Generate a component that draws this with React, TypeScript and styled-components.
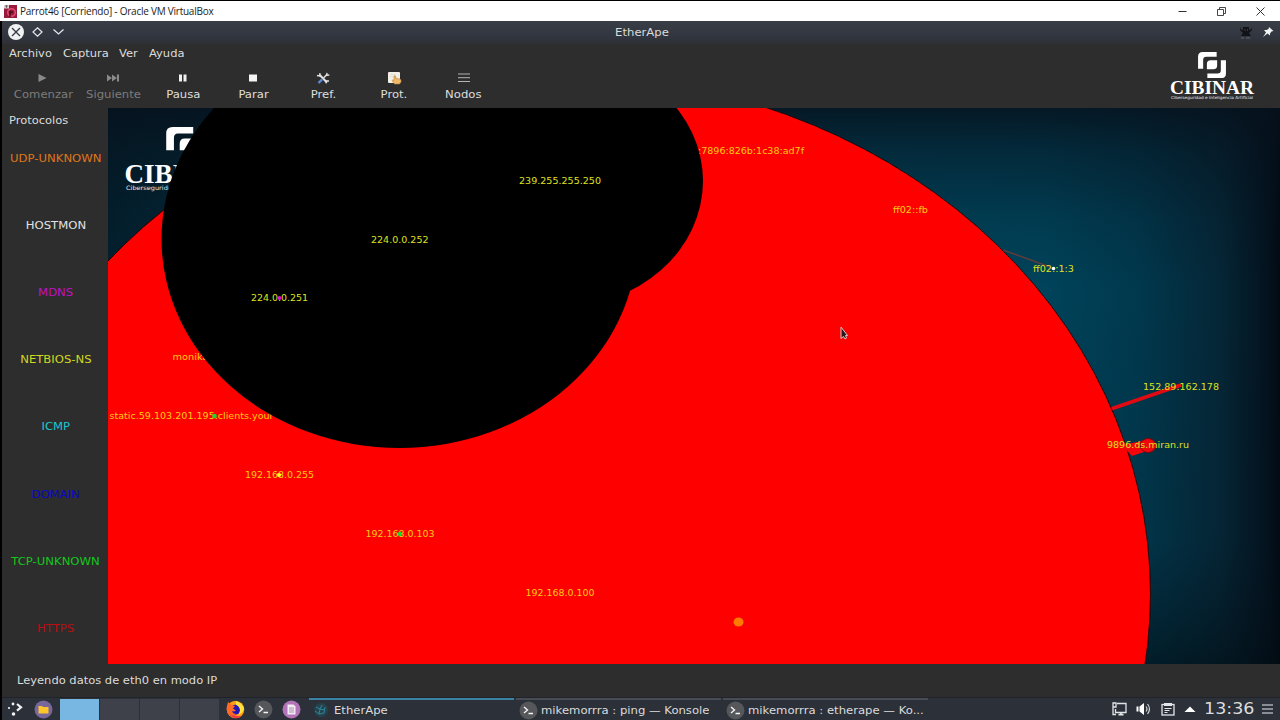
import { FC, ReactNode } from 'react';
import styled, { createGlobalStyle } from 'styled-components';

type Tool = {
  label: string;
  icon: ReactNode;
  disabled?: boolean;
};

type NodeLabel = {
  text: string;
  x: number;
  y: number;
  width: number;
  color?: string;
};

const PlayIcon = () => <svg width="14" height="14" viewBox="0 0 14 14">
  <path d="M2.500 3 L10.500 7 L2.500 11Z" fill="#8a8a8a" />
</svg>;

const NextIcon = () => <svg width="14" height="14" viewBox="0 0 14 14">
  <path d="M1 3.500 L6 7 L1 10.500Z M6 3.500 L11 7 L6 10.500Z M11 3.500H13V10.500H11Z" fill="#8a8a8a" />
</svg>;

const PauseIcon = () => <svg width="14" height="14" viewBox="0 0 14 14">
  <path d="M3 3.500H6V10.500H3Z M7.500 3.500H10.500V10.500H7.500Z" fill="#f0f0f0" />
</svg>;

const StopIcon = () => <svg width="14" height="14" viewBox="0 0 14 14">
  <rect x="3" y="3.500" width="8" height="7" fill="#f4f4f4" />
</svg>;

const PrefIcon = () => <svg width="14" height="14" viewBox="0 0 14 14" fill="none">
  <path d="M3.500 3.800 L11 11.500" stroke="#e4e4e4" strokeWidth="2" />
  <path d="M11 3.500 L6.500 8" stroke="#d0d3d6" strokeWidth="1.700" />
  <path d="M6 8.500 L2.500 12" stroke="#5b8ddb" strokeWidth="2.400" />
  <path d="M1 4.500 L3.500 5 L4 2 M11 1.800 L10.600 4.300 L13.300 4 M10 12.300 L10.500 10 L13 10" stroke="#e4e4e4" strokeWidth="1.300" />
</svg>;

const ProtIcon = () => <svg width="16" height="14" viewBox="0 0 16 14">
  <rect x="2" y="1" width="12" height="11" rx="1" fill="#f3f0e6" />
  <path d="M4 3.500H10 M4 5.500H8" stroke="#dcd9ce" strokeWidth=".7" />
  <path d="M8 5 Q9.500 4 9.800 6 V7.500 L14 8 Q15.500 8.500 15 11 L13.500 13 H8.500 L6 9.500 Q6.500 8.500 8 9.500Z" fill="#f0b968" stroke="#b98342" strokeWidth=".6" />
</svg>;

const ListIcon = () => <svg width="14" height="14" viewBox="0 0 14 14">
  <path d="M1 3H13 M1 6.700H13 M1 10.500H13" stroke="#b4b4b4" strokeWidth="1" />
</svg>;

const TOOLS: Tool[] = [
  { label: 'Comenzar', icon: <PlayIcon />, disabled: true },
  { label: 'Siguiente', icon: <NextIcon />, disabled: true },
  { label: 'Pausa', icon: <PauseIcon /> },
  { label: 'Parar', icon: <StopIcon /> },
  { label: 'Pref.', icon: <PrefIcon /> },
  { label: 'Prot.', icon: <ProtIcon /> },
  { label: 'Nodos', icon: <ListIcon /> },
];

const PROTOCOLS = [
  { name: 'UDP-UNKNOWN', color: '#e0761a' },
  { name: 'HOSTMON', color: '#e2e2e2' },
  { name: 'MDNS', color: '#c010c4' },
  { name: 'NETBIOS-NS', color: '#d2d820' },
  { name: 'ICMP', color: '#1cc8cc' },
  { name: 'DOMAIN', color: '#0808c4' },
  { name: 'TCP-UNKNOWN', color: '#12c81c' },
  { name: 'HTTPS', color: '#b80f12' },
];

const ON_RED = '#ffcc10';

// Labels that the black traffic circles partly cover
const COVERED_LABELS: NodeLabel[] = [
  { text: ':7896:826b:1c38:ad7f', x: 698, y: 154, width: 106, color: ON_RED },
  { text: 'monika', x: 172.5, y: 360, width: 36, color: ON_RED },
  { text: 'static.59.103.201.195.clients.your', x: 109.5, y: 418.5, width: 164, color: ON_RED },
];

const FREE_LABELS: NodeLabel[] = [
  { text: '239.255.255.250', x: 519, y: 183.5, width: 82 },
  { text: '224.0.0.252', x: 371, y: 242.5, width: 57.5 },
  { text: '224.0.0.251', x: 251, y: 301, width: 57 },
  { text: 'ff02::fb', x: 893, y: 213, width: 35, color: ON_RED },
  { text: 'ff02::1:3', x: 1033, y: 271.5, width: 41 },
  { text: '152.89.162.178', x: 1143, y: 390, width: 76 },
  { text: '9896.ds.miran.ru', x: 1107, y: 448, width: 82 },
  { text: '192.168.0.255', x: 245, y: 478, width: 69, color: ON_RED },
  { text: '192.168.0.103', x: 365.5, y: 537, width: 69, color: ON_RED },
  { text: '192.168.0.100', x: 525.5, y: 595.5, width: 69, color: ON_RED },
];

const LogoMark: FC<{ size: number }> = ({ size }) => <svg width={size} height={size * 0.93} viewBox="0 0 30 28">
  <path d="M0 18 V5 Q0 0 5 0 H20 V5 H9 Q5.500 5 5.500 8.500 V18Z" fill="#fff" />
  <path d="M30 9 V23 Q30 28 25 28 H10 V23 H21 Q24.500 23 24.500 19.500 V9Z" fill="#fff" />
  <path d="M9.500 18.500 V13 Q9.500 9 13.500 9 H20.500 V14.500 Q20.500 18.500 16.500 18.500Z" fill="#fff" />
</svg>;

const Labels: FC<{ items: NodeLabel[] }> = ({ items }) => <>
  { items.map((item) => (
    <NodeText
      key={item.text}
      x={item.x}
      y={item.y}
      textLength={item.width}
      lengthAdjust="spacingAndGlyphs"
      $color={item.color}
    >
      { item.text }
    </NodeText>
  )) }
</>;

// The drawing uses the same coordinates as the whole desktop
const TrafficMap = () => <MapSvg viewBox="108 108 1172 556">
  <defs>
    <linearGradient id="seaX" x1="0" x2="1" y1="0" y2="0">
      <stop offset="0" stopColor="#03202e" />
      <stop offset=".12" stopColor="#032b3c" />
      <stop offset=".6" stopColor="#00455c" />
      <stop offset=".8" stopColor="#00435a" />
      <stop offset=".88" stopColor="#01384d" />
      <stop offset=".95" stopColor="#052636" />
      <stop offset=".99" stopColor="#04121e" />
      <stop offset="1" stopColor="#020a12" />
    </linearGradient>
    <linearGradient id="seaY" x1="0" x2="0" y1="0" y2="1">
      <stop offset="0" stopColor="#06111c" stopOpacity=".85" />
      <stop offset=".08" stopColor="#06111c" stopOpacity=".5" />
      <stop offset=".2" stopColor="#06111c" stopOpacity=".17" />
      <stop offset=".32" stopColor="#06111c" stopOpacity="0" />
      <stop offset=".78" stopColor="#06111c" stopOpacity=".08" />
      <stop offset="1" stopColor="#020c12" stopOpacity=".6" />
    </linearGradient>
  </defs>
  <rect x="108" y="108" width="1172" height="556" fill="url(#seaX)" />
  <rect x="108" y="108" width="1172" height="556" fill="url(#seaY)" />

  <svg x="165.500" y="127" width="40" height="36" viewBox="0 0 30 28">
    <path d="M0 18 V5 Q0 0 5 0 H21 V5 H9 Q6 5 6 8.500 V18Z" fill="#fff" />
    <path d="M10.500 18 V13 Q10.500 9 14.500 9 H22 V18Z" fill="#fff" />
  </svg>
  <Brand x="124.500" y="182.500" fontSize="27">CIBI</Brand>
  <BrandNote x="126" y="190" fontSize="6" textLength="50" lengthAdjust="spacingAndGlyphs">Ciberseguridad</BrandNote>

  <path d="M1003 250 L1053 268" stroke="#5d3c3c" strokeWidth="1.500" />
  <path d="M1108 410 L1181 385" stroke="#e20a12" strokeWidth="3.500" />
  <ellipse cx="560.500" cy="594" rx="590" ry="519" fill="#f00" stroke="#240006" strokeWidth="1" />
  <path d="M1122 445 L1147 440 V451 L1132 456Z" fill="#f3050a" />
  <ellipse cx="1148" cy="445.500" rx="7.800" ry="7" fill="#ee060c" stroke="#7a0710" />
  <Labels items={COVERED_LABELS} />
  <ellipse cx="399.500" cy="239" rx="238" ry="209" />
  <ellipse cx="560" cy="181" rx="143" ry="126" />
  <Labels items={FREE_LABELS} />

  <ellipse cx="738.500" cy="622" rx="5" ry="4.500" fill="#ff7a00" />
  <circle cx="279.500" cy="298" r="1.900" fill="#e010d0" />
  <circle cx="214.500" cy="416" r="2.300" fill="#12e030" />
  <circle cx="279" cy="475" r="2" fill="#ffff20" />
  <circle cx="400" cy="534" r="2.200" fill="#12e030" />
  <circle cx="1053.500" cy="268.500" r="1.800" fill="#fff" />
  <path d="M841 327 V338.500 L843.500 336.500 L845 339 L846.500 338 L845.500 335.500 H847.500Z" fill="#231b1d" stroke="#ddd" strokeWidth=".9" />
</MapSvg>;

const KonsoleIcon = () => <svg width="19" height="19" viewBox="0 0 19 19">
  <circle cx="9.500" cy="9.500" r="9" fill="#55575a" />
  <path d="M5 6 L8.500 9 L5 12 M9.500 12.500H14" fill="none" stroke="#f4f4f4" strokeWidth="1.400" />
</svg>;

const FolderIcon = () => <svg width="19" height="19" viewBox="0 0 19 19">
  <circle cx="9.500" cy="9.500" r="9" fill="#77679a" />
  <path d="M4.500 6 H8 L9 7 H14.500 V13.500 H4.500Z" fill="#fcc52c" />
</svg>;

const NotesIcon = () => <svg width="19" height="19" viewBox="0 0 19 19">
  <circle cx="9.500" cy="9.500" r="9" fill="#b273b8" />
  <path d="M5.500 4.500 H11.500 L13.500 6.500 V14.500 H5.500Z" fill="#f2edf3" />
  <path d="M7 8H12 M7 10H12 M7 12H12" stroke="#9b71a0" strokeWidth=".8" />
</svg>;

const FirefoxIcon = () => <svg width="19" height="19" viewBox="0 0 19 19">
  <circle cx="9.500" cy="9.500" r="8.800" fill="#ff9b18" />
  <path d="M1 6 Q-.5 13 6 17 Q11 20 15.500 16 Q9 17 6 13Z" fill="#f03a43" />
  <circle cx="9.300" cy="9.800" r="5" fill="#2116b8" />
  <path d="M10 1 Q9 5 12 6 Q16 10 12 15 Q18 13 18 8 Q16 3 10 1Z" fill="#ffe13c" />
  <path d="M1 6 L2 2 L5.500 5 L9 6 L7 8.500 L10 10.500 Q8 12 6 11 Q7 14 10 14 Q7 17 3 14 Q0 11 1 6Z" fill="#ff6a24" />
</svg>;

const ApeIcon = () => <svg width="16" height="16" viewBox="0 0 16 16">
  <circle cx="8" cy="8" r="7" fill="#25434e" />
  <path d="M3 5 L7 7 L9 3 M7 7 L6 12 L11 11 L12 5 M6 12 L2 9 M7 7 L12 8" stroke="#2c8796" fill="none" />
</svg>;

const LauncherIcon = () => <svg width="16" height="16" viewBox="0 0 16 16" fill="#f0f2f4">
  <circle cx="6" cy="3" r="1.400" />
  <circle cx="2" cy="7" r="1.100" />
  <circle cx="6.500" cy="13" r="1.800" />
  <path d="M10 3 L14 6.300 L10 9.600" fill="none" stroke="#f0f2f4" strokeWidth="2.200" />
</svg>;

const ScreenIcon = () => <svg width="16" height="14" viewBox="0 0 16 14" fill="none" stroke="#e2e5e8" strokeWidth="1.300">
  <path d="M6 1.500 H15 V10.500 H4.500 V7 M2 1 H5 V5 H2Z M2 5 V12.500 H5" />
  <path d="M10 10.500V12.500 M7.500 12.700H12.500" strokeWidth="1.800" />
</svg>;

const SpeakerIcon = () => <svg width="16" height="14" viewBox="0 0 16 14">
  <path d="M.5 4.500 H2.500 V9.500 H.5Z M3.500 4.500 L8 1 V13 L3.500 9.500Z" fill="#fff" />
  <path d="M10 4.500 Q12 7 10 9.500 M11.500 2 Q15.500 7 11.500 12" fill="none" stroke="#d0d4d8" strokeWidth="1.200" />
</svg>;

const ClipboardIcon = () => <svg width="14" height="14" viewBox="0 0 14 14" fill="none" stroke="#e2e5e8" strokeWidth="1.300">
  <rect x="1" y="2.500" width="12" height="10.500" />
  <path d="M3 2.500H11" strokeWidth="3" />
  <path d="M3.500 6.500H10.500 M3.500 8.500H8.500 M3.500 10.500H6.500" strokeWidth="1" />
</svg>;

export default function App() {
  return <>
    <GlobalStyle />
    <Desktop>
      <HostBar>
        <svg width="13" height="13" viewBox="0 0 13 13">
          <rect width="13" height="13" fill="#981b3b" />
          <circle cx="7.500" cy="7.500" r="3.800" fill="none" stroke="#e44c71" strokeWidth="1.500" />
          <path d="M6 12 V7 H9" fill="none" stroke="#450918" strokeWidth="1.400" />
          <rect width="5" height="3.500" fill="#d8d0d3" />
          <path d="M1 1H4 M2.500 0V3" stroke="#554449" strokeWidth=".7" />
        </svg>
        <HostTitle>Parrot46 [Corriendo] - Oracle VM VirtualBox</HostTitle>
        <HostButtons>
          <svg width="9" height="9" viewBox="0 0 9 9"><path d="M.5 4.500H8.500" stroke="#333" /></svg>
          <svg width="9" height="9" viewBox="0 0 9 9" fill="none" stroke="#333" strokeWidth=".9">
            <path d="M.5 2.500H6.500V8.500H.5Z M2.500 2.500V.5H8.500V6.500H6.500" />
          </svg>
          <svg width="9" height="9" viewBox="0 0 9 9"><path d="M.5 .5L8.500 8.500 M8.500 .5L.5 8.500" stroke="#333" /></svg>
        </HostButtons>
      </HostBar>

      <GuestScreen>
        <WindowBar>
          <WindowButtons>
            <svg width="16" height="16" viewBox="0 0 16 16">
              <circle cx="8" cy="8" r="8" fill="#f0f1f3" />
              <path d="M4 4L12 12 M12 4L4 12" stroke="#343a43" strokeWidth="1.300" />
            </svg>
            <svg width="11" height="10" viewBox="0 0 11 10">
              <path d="M5.500 .8 L10 5 L5.500 9.200 L1 5Z" fill="none" stroke="#e8eaec" strokeWidth="1.200" />
            </svg>
            <svg width="11" height="8" viewBox="0 0 11 8">
              <path d="M.5 1.500 L5.500 6 L10.500 1.500" fill="none" stroke="#e8eaec" strokeWidth="1.200" />
            </svg>
          </WindowButtons>
          <WindowTitle>EtherApe</WindowTitle>
          <WindowStatus>
            <svg width="12" height="14" viewBox="0 0 12 14">
              <path d="M1 1 Q0 5 3 5 L4 2 H8 L9 5 Q12 5 11 1 L12 5 L9 8 L11 11 H1 L3 8 L0 5Z M3 2H9V9H3Z" fill="#111318" />
              <path d="M4.500 5H5.500 M7 5H8" stroke="#765c40" />
              <path d="M1 13H4 M6 13H10" stroke="#626870" />
            </svg>
            <svg width="12" height="12" viewBox="0 0 12 12">
              <path d="M7 1 L11.500 5 L9.500 5.500 L8 7.500 L8 9.500 L5.500 7.500 L1 11 L4 6.500 L2 4 L4.500 4 L6.500 3Z" fill="#f2f3f5" />
            </svg>
          </WindowStatus>
        </WindowBar>

        <MenuBar>
          <LeftText>Archivo</LeftText>
          <LeftText>Captura</LeftText>
          <LeftText>Ver</LeftText>
          <LeftText>Ayuda</LeftText>
        </MenuBar>

        <Toolbar>
          { TOOLS.map((tool) => (
            <ToolButton key={tool.label} $disabled={tool.disabled}>
              { tool.icon }
              <Text>{ tool.label }</Text>
            </ToolButton>
          )) }
        </Toolbar>

        <Content>
          <Sidebar>
            <SidebarTitle>
              <LeftText>Protocolos</LeftText>
            </SidebarTitle>
            <ProtocolList>
              { PROTOCOLS.map((protocol) => (
                <Protocol key={protocol.name} $color={protocol.color}>
                  <Text>{ protocol.name }</Text>
                </Protocol>
              )) }
            </ProtocolList>
          </Sidebar>
          <TrafficMap />
        </Content>

        <StatusBar>
          <LeftText>Leyendo datos de eth0 en modo IP</LeftText>
        </StatusBar>

        <Taskbar>
          <Launchers>
            <LauncherIcon />
            <FolderIcon />
          </Launchers>
          <Pager>
            <PagerCell $active />
            <PagerCell />
            <PagerCell />
            <PagerCell />
          </Pager>
          <QuickApps>
            <FirefoxIcon />
            <KonsoleIcon />
            <NotesIcon />
          </QuickApps>
          <Tasks>
            <Task $active><ApeIcon /><TaskText>EtherApe</TaskText></Task>
            <Task><KonsoleIcon /><TaskText>mikemorrra : ping — Konsole</TaskText></Task>
            <Task><KonsoleIcon /><TaskText>mikemorrra : etherape — Ko...</TaskText></Task>
          </Tasks>
          <Tray>
            <ScreenIcon />
            <SpeakerIcon />
            <ClipboardIcon />
            <svg width="12" height="6" viewBox="0 0 12 6"><path d="M.5 6 L6 .5 L11.500 6Z" fill="#fff" /></svg>
          </Tray>
          <Clock>13:36</Clock>
          <svg width="11" height="10" viewBox="0 0 11 10">
            <path d="M0 1H11 M0 5H11 M0 9H11" stroke="#a9adb2" strokeWidth="1.300" />
          </svg>
        </Taskbar>
      </GuestScreen>

      <Watermark>
        <LogoMark size={28} />
        <svg width="88" height="22" viewBox="0 0 88 22">
          <Brand x="2" y="15.500" fontSize="19" textLength="84" lengthAdjust="spacingAndGlyphs">CIBINAR</Brand>
          <BrandNote x="3" y="20.500" fontSize="4" textLength="82" lengthAdjust="spacingAndGlyphs">
            Ciberseguridad e Inteligencia Artificial
          </BrandNote>
        </svg>
      </Watermark>
    </Desktop>
  </>;
}

const GlobalStyle = createGlobalStyle`
  * {
    box-sizing: border-box;
  }
  body {
    margin: 0;
    background: #000;
    overflow: hidden;
  }
  svg {
    flex-shrink: 0;
  }
`;

const Desktop = styled.div`
  position: relative;
  display: flex;
  flex-direction: column;
  width: 1280px;
  height: 720px;
  padding-top: 1px;
  overflow: hidden;
  background: #000;
  color: #dcdcdc;
  font-family: "DejaVu Sans", sans-serif;
  font-size: 10.4px;
  line-height: 14px;
  white-space: nowrap;
`;

// The guest screen is scaled wider than it is tall, its text too
const Text = styled.span`
  display: inline-block;
  transform: scaleX(1.12);
`;

const LeftText = styled(Text)`
  transform: scaleX(1.105);
  transform-origin: left;
`;

const TaskText = styled(Text)`
  transform-origin: left;
`;

const HostBar = styled.div`
  display: flex;
  align-items: center;
  height: 20px;
  padding: 0 15px 0 4px;
  background: #fff;
  color: #1c1c1c;
`;

const HostTitle = styled.span`
  margin-left: 3px;
  font-family: "Open Sans", "Noto Sans", sans-serif;
  font-size: 10px;
  letter-spacing: -0.24px;
`;

const HostButtons = styled.div`
  display: flex;
  gap: 30px;
  margin-left: auto;
`;

const GuestScreen = styled.div`
  display: flex;
  flex-direction: column;
  height: 699px;
  margin-left: 2px;
  background: #2d2d2d;
`;

const WindowBar = styled.div`
  display: grid;
  grid-template-columns: 1fr auto 1fr;
  align-items: center;
  height: 23px;
  padding: 0 6px 2px;
  background: linear-gradient(#393e46, #30353f 70%, #2e3036);
`;

const WindowTitle = styled(Text)`
  margin-left: 2px;
`;

const WindowButtons = styled.div`
  display: flex;
  align-items: center;
  gap: 8px;

  > svg:nth-child(3) {
    margin-left: 2px;
  }
`;

const WindowStatus = styled.div`
  display: flex;
  align-items: center;
  justify-content: flex-end;
  gap: 10px;
`;

const MenuBar = styled.div`
  display: grid;
  grid-template-columns: 54px 56px 29.5px auto;
  align-items: center;
  height: 18px;
  padding-left: 7px;
`;

const Toolbar = styled.div`
  display: flex;
  height: 46px;
  padding: 9px 0 0 6px;
`;

const ToolButton = styled.div<{ $disabled?: boolean }>`
  display: flex;
  flex-direction: column;
  align-items: center;
  gap: 2px;
  width: 70.1px;
  color: ${({ $disabled }) => ($disabled ? '#7c7c7c' : '#dedede')};
`;

const Content = styled.div`
  display: flex;
  height: 556px;
`;

const Sidebar = styled.div`
  display: flex;
  flex-direction: column;
  width: 106px;
`;

const SidebarTitle = styled.div`
  height: 16px;
  padding: 5px 0 0 7px;
`;

const ProtocolList = styled.div`
  display: grid;
  grid-template-rows: repeat(8, 67.2px);
`;

const Protocol = styled.div<{ $color: string }>`
  display: flex;
  align-items: center;
  justify-content: center;
  padding-left: 1px;
  color: ${({ $color }) => $color};
`;

const MapSvg = styled.svg`
  display: block;
  width: 1172px;
  height: 556px;
  overflow: hidden;
`;

const NodeText = styled.text<{ $color?: string }>`
  fill: ${({ $color }) => $color ?? '#dfe020'};
  font-family: "DejaVu Sans", sans-serif;
  font-size: 8.8px;
`;

const Brand = styled.text`
  fill: #fff;
  font-family: "Liberation Serif", serif;
  font-weight: bold;
`;

const BrandNote = styled.text`
  fill: #e8ecee;
  font-family: "DejaVu Sans", sans-serif;
`;

const StatusBar = styled.div`
  display: flex;
  align-items: center;
  height: 33px;
  padding: 0 0 2px 15px;
`;

const Taskbar = styled.div`
  display: flex;
  align-items: center;
  height: 23px;
  padding-right: 7px;
  border-top: 1px solid #20242a;
  background: #2b3039;
`;

const Launchers = styled.div`
  display: flex;
  align-items: center;
  gap: 11px;
  width: 58px;
  padding-left: 5px;
`;

const Pager = styled.div`
  display: flex;
  gap: 1px;
  height: 21px;
`;

const PagerCell = styled.div<{ $active?: boolean }>`
  width: 39px;
  background: ${({ $active }) => ($active ? '#78b7e2' : '#3e414a')};
`;

const QuickApps = styled.div`
  display: flex;
  gap: 9px;
  padding: 0 8px 0 7px;
`;

const Tasks = styled.div`
  display: flex;
  gap: 2px;
  height: 22px;
`;

const Task = styled.div<{ $active?: boolean }>`
  display: flex;
  align-items: center;
  gap: ${({ $active }) => ($active ? '5px' : '3.5px')};
  width: 205px;
  padding-left: ${({ $active }) => ($active ? '4px' : '2.5px')};
  border-top: 2px solid ${({ $active }) => ($active ? '#3a83a5' : '#484c54')};
`;

const Tray = styled.div`
  display: flex;
  align-items: center;
  gap: 9px;
  margin-left: auto;
`;

const Clock = styled.div`
  width: 44px;
  margin: 0 14px 0 8px;
  font-size: 15.5px;
  transform: scaleX(1.13);
  transform-origin: left;
`;

// Broadcaster logo that floats over the window
const Watermark = styled.div`
  position: absolute;
  top: 52px;
  right: 24px;
  display: flex;
  flex-direction: column;
  align-items: center;
`;
